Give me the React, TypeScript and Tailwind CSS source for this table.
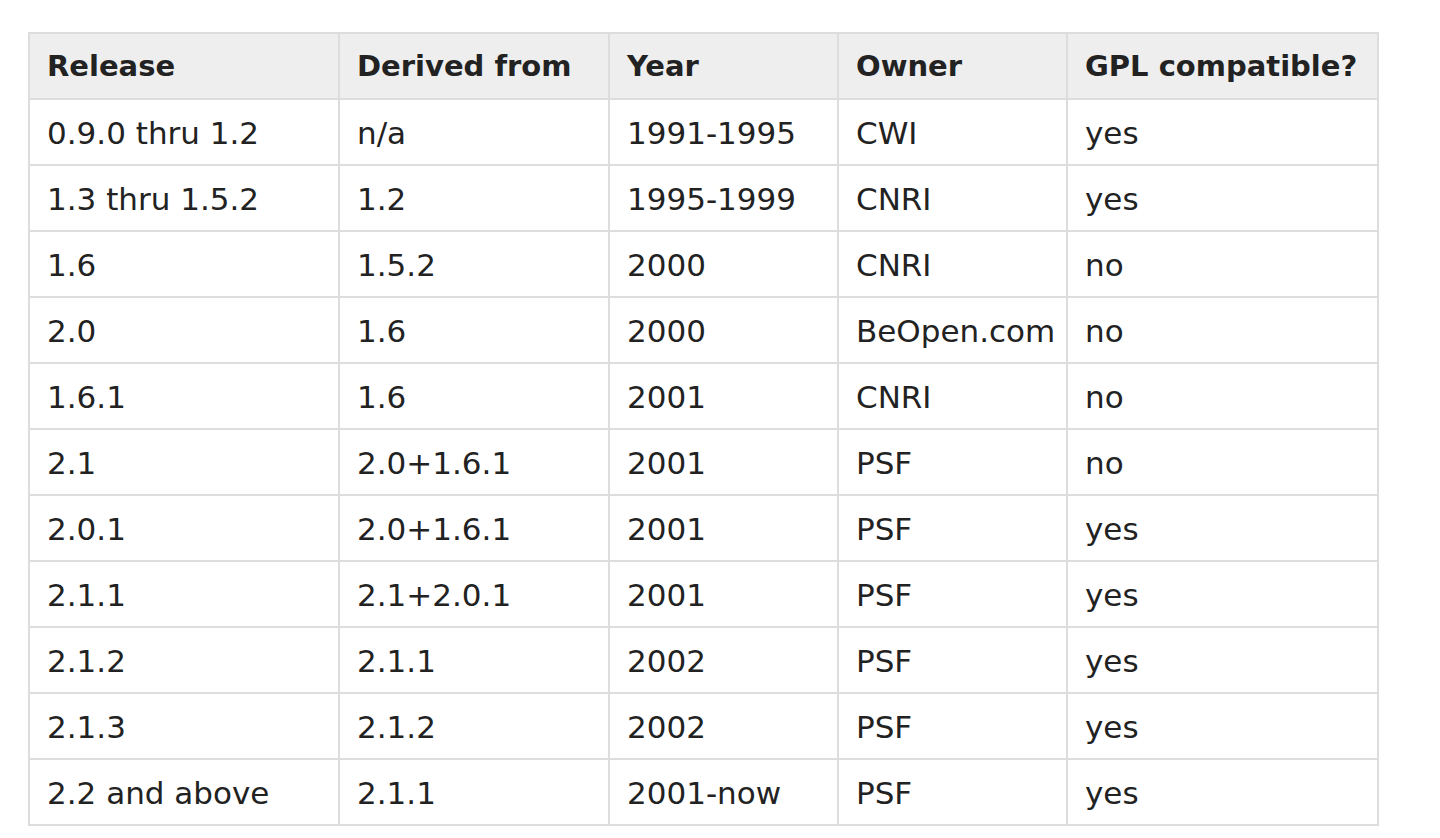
import React from "react";

const rows: string[][] = [
  ["0.9.0 thru 1.2", "n/a", "1991-1995", "CWI", "yes"],
  ["1.3 thru 1.5.2", "1.2", "1995-1999", "CNRI", "yes"],
  ["1.6", "1.5.2", "2000", "CNRI", "no"],
  ["2.0", "1.6", "2000", "BeOpen.com", "no"],
  ["1.6.1", "1.6", "2001", "CNRI", "no"],
  ["2.1", "2.0+1.6.1", "2001", "PSF", "no"],
  ["2.0.1", "2.0+1.6.1", "2001", "PSF", "yes"],
  ["2.1.1", "2.1+2.0.1", "2001", "PSF", "yes"],
  ["2.1.2", "2.1.1", "2002", "PSF", "yes"],
  ["2.1.3", "2.1.2", "2002", "PSF", "yes"],
  ["2.2 and above", "2.1.1", "2001-now", "PSF", "yes"],
];

const headers = ["Release", "Derived from", "Year", "Owner", "GPL compatible?"];

export default function App() {
  return (
    <main className="min-h-screen bg-white pl-[28px] pt-[32px] text-[#222222] font-['DejaVu_Sans',sans-serif]">
      <table className="border-collapse border-2 border-[#dddddd] table-fixed w-[1349px]">
        <colgroup>
          <col className="w-[310px]" />
          <col className="w-[270px]" />
          <col className="w-[229px]" />
          <col className="w-[229px]" />
          <col className="w-[311px]" />
        </colgroup>
        <thead>
          <tr className="bg-[#eeeeee] h-[66px]">
            {headers.map((h) => (
              <th
                key={h}
                className="border-2 border-[#dddddd] text-left font-bold text-[29px] pl-[17px] pt-[2px] align-middle"
              >
                {h}
              </th>
            ))}
          </tr>
        </thead>
        <tbody>
          {rows.map((r, i) => (
            <tr key={i} className="h-[66px]">
              {r.map((c, j) => (
                <td
                  key={j}
                  className="border-2 border-[#dddddd] text-[31px] pl-[17px] pt-[2px] align-middle whitespace-nowrap"
                >
                  {c}
                </td>
              ))}
            </tr>
          ))}
        </tbody>
      </table>
    </main>
  );
}
